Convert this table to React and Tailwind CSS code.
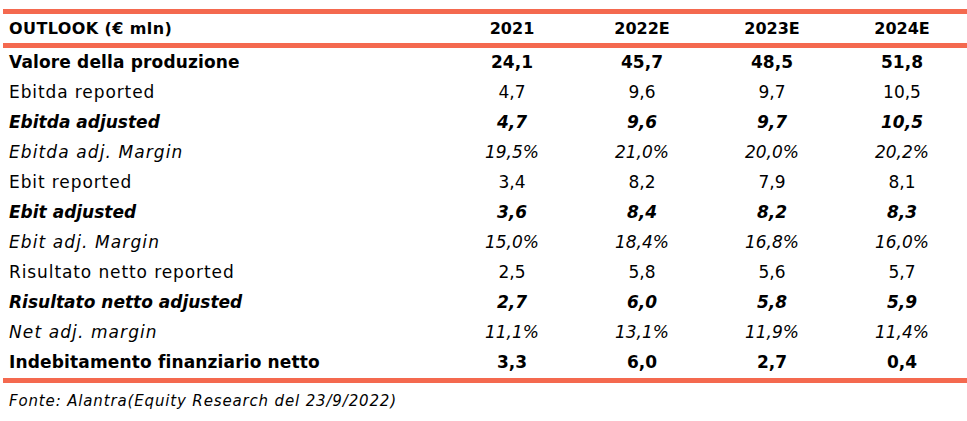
import React from 'react'

const rows = [
  { label: 'Valore della produzione', values: ['24,1', '45,7', '48,5', '51,8'], style: 'bold' },
  { label: 'Ebitda reported', values: ['4,7', '9,6', '9,7', '10,5'], style: 'normal' },
  { label: 'Ebitda adjusted', values: ['4,7', '9,6', '9,7', '10,5'], style: 'boldItalic' },
  { label: 'Ebitda adj. Margin', values: ['19,5%', '21,0%', '20,0%', '20,2%'], style: 'italic' },
  { label: 'Ebit reported', values: ['3,4', '8,2', '7,9', '8,1'], style: 'normal' },
  { label: 'Ebit adjusted', values: ['3,6', '8,4', '8,2', '8,3'], style: 'boldItalic' },
  { label: 'Ebit adj. Margin', values: ['15,0%', '18,4%', '16,8%', '16,0%'], style: 'italic' },
  { label: 'Risultato netto reported', values: ['2,5', '5,8', '5,6', '5,7'], style: 'normal' },
  { label: 'Risultato netto adjusted', values: ['2,7', '6,0', '5,8', '5,9'], style: 'boldItalic' },
  { label: 'Net adj. margin', values: ['11,1%', '13,1%', '11,9%', '11,4%'], style: 'italic' },
  { label: 'Indebitamento finanziario netto', values: ['3,3', '6,0', '2,7', '0,4'], style: 'bold' },
]

const styleClass = {
  bold: 'font-bold',
  normal: 'font-normal',
  boldItalic: 'font-bold italic',
  italic: 'font-normal italic',
}

// Century Gothic labels run wider than DejaVu, so pad the lighter ones
const labelTracking = {
  bold: 'tracking-[0.15px]',
  normal: 'tracking-[0.9px]',
  boldItalic: 'tracking-normal',
  italic: 'tracking-[1.1px]',
}

export default function App() {
  return (
    <div className="w-[967px] h-[421px] bg-white pt-[9px] pl-[3px] text-black font-['DejaVu_Sans',sans-serif]">
      {/* Header */}
      <div className="grid grid-cols-[444px_130px_130px_130px_130px] h-[39px] border-y-[5px] border-[#f4694f] items-center text-[16px] font-bold">
        <div className="pl-[6px] tracking-[0.4px]">OUTLOOK (€ mln)</div>
        <div className="text-center">2021</div>
        <div className="text-center">2022E</div>
        <div className="text-center">2023E</div>
        <div className="text-center">2024E</div>
      </div>

      {/* Body */}
      <div className="border-b-[5px] border-[#f4694f]">
        {rows.map((row) => (
          <div
            key={row.label}
            className={`grid grid-cols-[444px_130px_130px_130px_130px] h-[30px] items-center text-[17px] ${styleClass[row.style]}`}
          >
            <div className={`pl-[6px] ${labelTracking[row.style]}`}>{row.label}</div>
            {row.values.map((v, i) => (
              <div key={i} className="text-center">{v}</div>
            ))}
          </div>
        ))}
      </div>

      <div className="pl-[6px] pt-[7px] text-[15px] italic tracking-[0.85px]">
        Fonte: Alantra(Equity Research del 23/9/2022)
      </div>
    </div>
  )
}
